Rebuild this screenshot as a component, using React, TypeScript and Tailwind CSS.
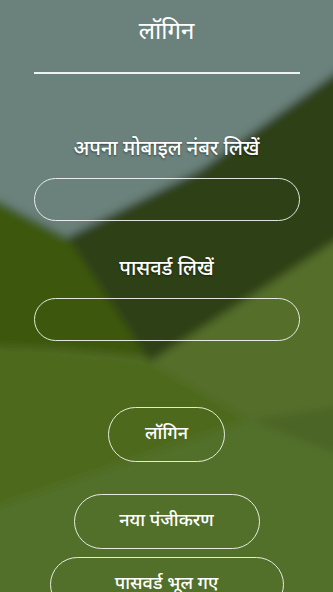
export default function App() {
  const font = { fontFamily: '"Noto Sans Devanagari", "Noto Sans", Roboto, sans-serif' };

  return (
    <div className="relative w-[333px] h-[592px] overflow-hidden bg-[#546d28] text-white" style={font}>
      {/* blurred background picture */}
      <svg className="absolute inset-0" width="333" height="592" viewBox="0 0 333 592">
        <defs>
          <filter id="blur" x="-20%" y="-20%" width="140%" height="140%">
            <feGaussianBlur stdDeviation="4" />
          </filter>
        </defs>
        <g filter="url(#blur)">
          <rect x="-40" y="-40" width="420" height="680" fill="#556e2b" />
          <polygon points="-40,345 150,362 250,420 -40,640" fill="#4e6b1f" />
          <polygon points="-40,520 250,420 380,470 380,640 -40,640" fill="#52702a" />
          <polygon points="250,420 380,400 380,470" fill="#4b6528" />
          <polygon points="-40,182 67,237 150,358 60,350 -40,345" fill="#3d580f" />
          <polygon points="380,40 380,212 150,362 67,237 200,170" fill="#2d3f12" />
          <polygon points="-40,-40 380,-40 380,45 333,75 200,170 67,237 -40,180" fill="#6b817c" />
        </g>
      </svg>

      <div className="relative flex flex-col items-center">
        <h1 className="mt-[14px] text-[24px] leading-[38px]">लॉगिन</h1>
        <div className="mt-[20px] w-[266px] h-[2px] bg-white/90" />

        <p className="mt-[61px] text-[20px] leading-[30px] font-medium [text-shadow:0_1px_2px_rgba(0,0,0,0.5)]">
          अपना मोबाइल नंबर लिखें
        </p>
        <input
          type="tel"
          className="mt-[13px] w-[266px] h-[43px] rounded-full border-[1.5px] border-white/85 bg-transparent px-4 outline-none"
        />

        <p className="mt-[34px] text-[20px] leading-[30px] font-medium [text-shadow:0_1px_2px_rgba(0,0,0,0.5)]">
          पासवर्ड लिखें
        </p>
        <input
          type="password"
          className="mt-[13px] w-[266px] h-[43px] rounded-full border-[1.5px] border-white/85 bg-transparent px-4 outline-none"
        />

        <button className="mt-[66px] w-[117px] h-[55px] rounded-full border-[1.5px] border-white/85 text-[18px] font-medium">
          लॉगिन
        </button>
        <button className="mt-[32px] w-[186px] h-[55px] rounded-full border-[1.5px] border-white/85 text-[18px] font-medium">
          नया पंजीकरण
        </button>
        <button className="mt-[8px] w-[234px] h-[55px] rounded-full border-[1.5px] border-white/85 text-[18px] font-medium">
          पासवर्ड भूल गए
        </button>
      </div>
    </div>
  );
}
